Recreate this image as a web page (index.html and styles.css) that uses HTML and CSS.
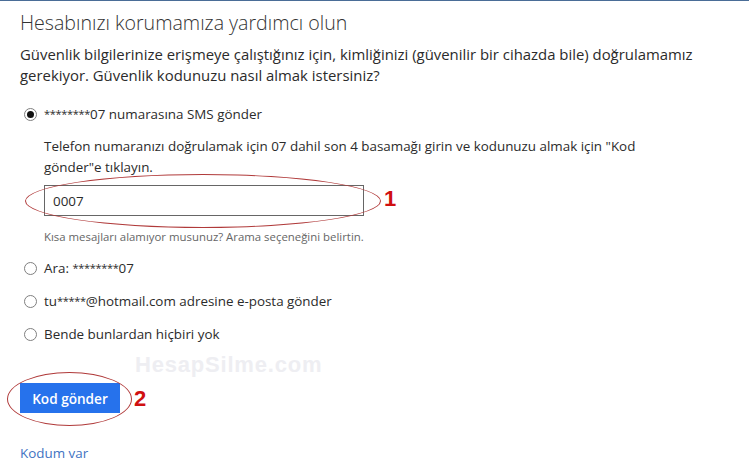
FILE: index.html
```html
<!DOCTYPE html>
<html lang="tr">
<head>
    <meta charset="UTF-8">
    <meta name="viewport" content="width=device-width, initial-scale=1.0">
    <title>Hesabınızı korumamıza yardımcı olun</title>
    <link rel="stylesheet" href="styles.css">
</head>
<body>
    <div class="page">
        <h1>Hesabınızı korumamıza yardımcı olun</h1>
        <p class="intro">Güvenlik bilgilerinize erişmeye çalıştığınız için, kimliğinizi (güvenilir bir cihazda bile) doğrulamamız gerekiyor. Güvenlik kodunuzu nasıl almak istersiniz?</p>

        <label class="option first">
            <input type="radio" name="method" checked>
            <span><span class="stars">********</span>07 numarasına SMS gönder</span>
        </label>

        <div class="sub">
            <p class="hint">Telefon numaranızı doğrulamak için 07 dahil son 4 basamağı girin ve kodunuzu almak için "Kod gönder"e tıklayın.</p>
            <div class="field">
                <input type="text" class="code" value="0007">
                <span class="mark mark-input"></span>
                <span class="num num-input">1</span>
            </div>
            <p class="small">Kısa mesajları alamıyor musunuz? Arama seçeneğini belirtin.</p>
        </div>

        <label class="option">
            <input type="radio" name="method">
            <span>Ara: <span class="stars">********</span>07</span>
        </label>
        <label class="option">
            <input type="radio" name="method">
            <span>tu<span class="stars">*****</span>@hotmail.com adresine e-posta gönder</span>
        </label>
        <label class="option">
            <input type="radio" name="method">
            <span>Bende bunlardan hiçbiri yok</span>
        </label>

        <div class="actions">
            <span class="watermark">HesapSilme.com</span>
            <div class="btn-wrap">
                <button class="btn">Kod gönder</button>
                <span class="mark mark-btn"></span>
                <span class="num num-btn">2</span>
            </div>
        </div>

        <a href="#" class="link">Kodum var</a>
    </div>
</body>
</html>
```

FILE: styles.css
```css
body {
    margin: 0;
    border-top: 1px solid #4a6d97;
    background: #fff;
    font-family: "Segoe UI", "Open Sans", sans-serif;
    color: #2b2b2b;
}

.page {
    padding: 0 20px;
}

h1 {
    margin: 0;
    padding-top: 9px;
    font-size: 19.6px;
    font-weight: 300;
    line-height: 26px;
    color: #333;
}

.intro {
    margin: 8px 0 0;
    font-size: 14.9px;
    line-height: 21px;
    max-width: 690px;
}

.option {
    display: flex;
    align-items: center;
    height: 20px;
    margin-top: 13px;
    padding-left: 4px;
    font-size: 13.4px;
}

.option.first {
    margin-top: 18px;
}

.stars {
    font-size: 11px;
    letter-spacing: -0.3px;
    vertical-align: 1px;
}

.option input {
    appearance: none;
    -webkit-appearance: none;
    width: 13px;
    height: 13px;
    margin: 0 7px 0 0;
    border: 1px solid #808080;
    border-radius: 50%;
    background: #fff;
    position: relative;
}

.option input:checked::after {
    content: "";
    position: absolute;
    left: 2px;
    top: 2px;
    width: 7px;
    height: 7px;
    border-radius: 50%;
    background: #111;
}

.sub {
    padding-left: 24px;
}

.hint {
    margin: 12px 0 0;
    font-size: 13.4px;
    line-height: 21px;
    max-width: 615px;
}

.field {
    position: relative;
    width: 320px;
    margin-top: 7px;
}

.code {
    display: block;
    width: 320px;
    height: 31px;
    box-sizing: border-box;
    padding: 0 8px;
    border: 1px solid #666;
    font-family: inherit;
    font-size: 13.4px;
    color: #2b2b2b;
}

.small {
    margin: 13px 0 0;
    font-size: 11.4px;
    line-height: 16px;
    color: #666;
}

.mark {
    position: absolute;
    border: 1px solid #b03a3a;
    border-radius: 50%;
    pointer-events: none;
}

.mark-input {
    left: -19px;
    top: -11px;
    width: 354px;
    height: 52px;
}

.num {
    position: absolute;
    font-family: "Liberation Sans", Arial, sans-serif;
    font-weight: bold;
    font-size: 22px;
    line-height: 22px;
    color: #d01010;
}

.num-input {
    left: 340px;
    top: 3px;
}

.actions {
    position: relative;
    margin-top: 39px;
}

.watermark {
    position: absolute;
    left: 115px;
    top: -31px;
    font-family: "Liberation Sans", Arial, sans-serif;
    font-weight: bold;
    font-size: 22px;
    line-height: 25px;
    color: #eeeef2;
    letter-spacing: 0.8px;
}

.btn-wrap {
    position: relative;
    width: 100px;
}

.btn {
    display: block;
    width: 100px;
    height: 30px;
    border: none;
    background-color: #2672ec;
    color: #fff;
    font-family: inherit;
    font-size: 13.6px;
    font-weight: 600;
    cursor: pointer;
}

.mark-btn {
    left: -13px;
    top: -11px;
    width: 123px;
    height: 52px;
}

.num-btn {
    left: 114px;
    top: 5px;
}

.link {
    display: block;
    margin-top: 31px;
    font-size: 13.4px;
    line-height: 18px;
    color: #4173c2;
    text-decoration: none;
    width: max-content;
}
```
